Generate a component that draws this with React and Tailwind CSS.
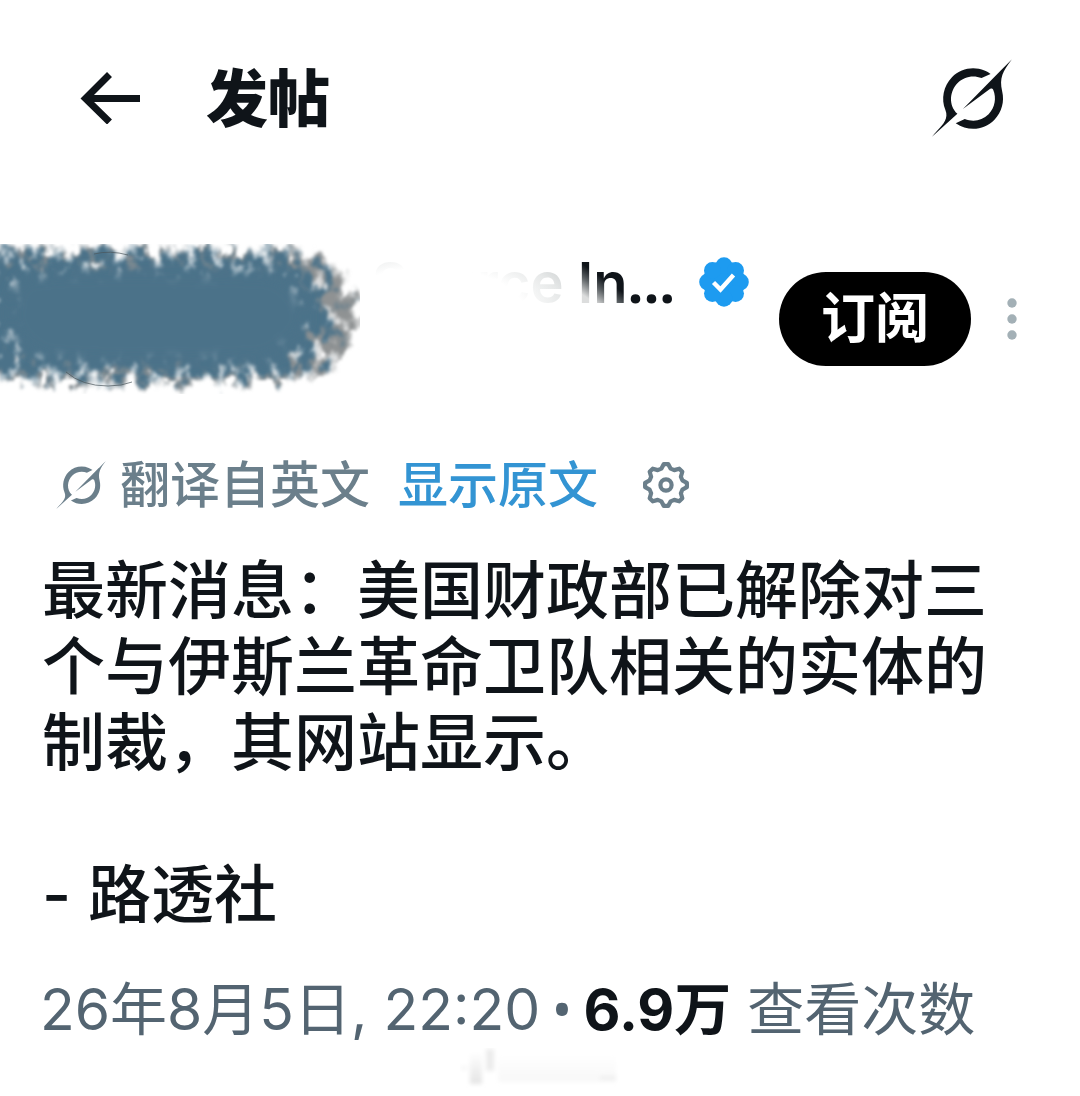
import React from 'react';

const GROK_PATH =
  'M12.745 20.54l10.97-8.19c.539-.4 1.307-.244 1.564.38 1.349 3.288.746 7.241-1.938 9.955-2.683 2.714-6.417 3.31-9.83 1.954l-3.728 1.745c5.347 3.697 11.84 2.782 15.898-1.324 3.219-3.255 4.216-7.692 3.284-11.693l.008.009c-1.351-5.878.332-8.227 3.782-13.031L33 0l-4.54 4.59v-.014L12.743 20.544m-2.263 1.987c-3.837-3.707-3.175-9.446.1-12.755 2.42-2.449 6.388-3.448 9.852-1.979l3.72-1.737c-.67-.49-1.53-1.017-2.515-1.387-4.455-1.854-9.789-.931-13.41 2.728-3.483 3.523-4.579 8.94-2.697 13.561 1.405 3.454-.899 5.898-3.22 8.364C1.49 30.2.666 31.074 0 32l10.478-9.466';

function polar(angle, radius) {
  const rad = (angle * Math.PI) / 180;
  return `${(24 + radius * Math.sin(rad)).toFixed(2)} ${(24 - radius * Math.cos(rad)).toFixed(2)}`;
}

const EIGHTHS = [0, 45, 90, 135, 180, 225, 270, 315];

const GEAR_PATH =
  'M' +
  EIGHTHS.map((a) => [polar(a - 6, 21), polar(a + 6, 21), polar(a + 16, 17), polar(a + 29, 17)].join('L')).join('L') +
  'Z';

function GrokLogo({ className }) {
  return (
    <svg viewBox="0 0 33 32" fill="currentColor" className={className} aria-hidden="true">
      <path d={GROK_PATH} />
    </svg>
  );
}

function VerifiedBadge() {
  return (
    <svg viewBox="-25 -25 50 50" className="w-[50px] h-[50px] shrink-0" role="img" aria-label="已认证">
      <g fill="#1d9bf0">
        <circle r="21" />
        {EIGHTHS.map((a) => (
          <circle key={a} cy="-16.4" r="8.4" transform={`rotate(${a})`} />
        ))}
      </g>
      <path d="M-10.5 0.5L-3.5 7.5L9.5 -7" fill="none" stroke="#fff" strokeWidth="4.4" />
    </svg>
  );
}

function GearIcon() {
  return (
    <svg viewBox="0 0 48 48" fill="none" stroke="currentColor" strokeLinejoin="round" className="w-12 h-12">
      <path d={GEAR_PATH} strokeWidth="4.2" />
      <circle cx="24" cy="24" r="5.6" strokeWidth="4.2" />
    </svg>
  );
}

// Brush stroke that covers the avatar
function BrushCover() {
  return (
    <svg viewBox="0 0 360 150" className="w-[360px] h-[150px] shrink-0" aria-hidden="true">
      <defs>
        <filter
          id="bristle"
          filterUnits="userSpaceOnUse"
          x="-60"
          y="-30"
          width="460"
          height="210"
          colorInterpolationFilters="sRGB"
        >
          <feGaussianBlur in="SourceAlpha" stdDeviation="12" result="soft" />
          <feTurbulence type="fractalNoise" baseFrequency="0.08 0.06" numOctaves="4" seed="7" result="grain" />
          <feColorMatrix values="0 0 0 0 0  0 0 0 0 0  0 0 0 0 0  1.8 0 0 0 -0.4" result="noise" />
          <feComposite in="soft" in2="noise" operator="arithmetic" k1="0" k2="2.6" k3="1.8" k4="-2.3" result="mask" />
          <feDisplacementMap
            in="SourceGraphic"
            in2="grain"
            scale="80"
            xChannelSelector="G"
            yChannelSelector="B"
            result="paint"
          />
          <feComposite in="paint" in2="mask" operator="in" />
          <feGaussianBlur stdDeviation="1.6" />
        </filter>
        <filter id="tint" filterUnits="userSpaceOnUse" x="-80" y="-60" width="520" height="280">
          <feGaussianBlur stdDeviation="6" />
        </filter>
        <filter id="core" filterUnits="userSpaceOnUse" x="-80" y="-60" width="520" height="280">
          <feGaussianBlur stdDeviation="7" />
        </filter>
      </defs>
      <g filter="url(#bristle)">
        <path d="M-16 -2H296Q362 8 366 82Q352 136 286 146H40Q4 146 -16 130Z" fill="#8f9293" />
        <path d="M-40 6H286Q324 22 332 74Q320 126 274 136H44Q14 136 -40 124Z" fill="#4c7289" filter="url(#tint)" />
      </g>
      <path d="M24 34Q60 24 270 30Q304 42 306 76Q298 104 262 116Q120 122 44 114Q14 100 10 74Q10 44 24 34Z" fill="#4c7289" filter="url(#core)" />
      <path d="M94 10Q110 6 128 11M66 128Q82 142 108 142Q122 142 132 138" fill="none" stroke="#4b565c" strokeWidth="0.7" />
    </svg>
  );
}

function Header() {
  return (
    <header className="flex items-center pl-20 pr-[68px] py-12 h-[196px]">
      <button type="button" aria-label="返回">
        <svg viewBox="0 0 60 52" fill="none" stroke="currentColor" strokeWidth="7" className="w-[60px] h-[52px]">
          <path d="M60 26.500H6M29.500 2.500L5.500 26.500L29.500 50" />
        </svg>
      </button>
      <h1 className="ml-[66px] pt-1 text-[62px] leading-[100px] font-black">发帖</h1>
      <button type="button" aria-label="Grok" className="ml-auto">
        <GrokLogo className="w-20 h-[78px]" />
      </button>
    </header>
  );
}

function Author() {
  return (
    <section className="flex items-center mt-12 pr-14">
      <BrushCover />
      <div className="ml-3 h-[150px] shrink-0">
        <div className="flex items-center h-[76px] whitespace-nowrap">
          <span className="text-[56px] leading-[76px] font-semibold">
            <span className="bg-[radial-gradient(ellipse_at_30%_95%,#ffffff_50%,#e6e8e8_72%,#b4b8ba)] bg-clip-text text-transparent">
              Source
            </span>{' '}
            <span className="bg-[linear-gradient(215deg,#0f1419_45%,#5b6063_58%,#dcdddd_75%)] bg-clip-text text-transparent">
              In
            </span>
            <span className="font-['Open_Sans'] font-bold">...</span>
          </span>
          <span className="ml-6">
            <VerifiedBadge />
          </span>
        </div>
      </div>
      <button
        type="button"
        className="ml-auto shrink-0 w-48 h-[94px] rounded-full bg-black text-white text-[54px] leading-[94px] font-bold"
      >
        订阅
      </button>
      <button type="button" aria-label="更多" className="ml-[29px] shrink-0 text-[#a3b0b6]">
        <svg viewBox="0 0 24 48" fill="currentColor" className="w-6 h-12">
          <circle cx="12" cy="8" r="4.700" />
          <circle cx="12" cy="24" r="4.700" />
          <circle cx="12" cy="40" r="4.700" />
        </svg>
      </button>
    </section>
  );
}

function TranslateBar() {
  return (
    <div className="flex items-center mt-14 px-14 text-[50px] leading-[70px] font-medium text-[#6b7f8b]">
      <GrokLogo className="w-[50px] h-12 mr-3.5" />
      <span>翻译自英文</span>
      <a href="#original" className="ml-7 text-[#3394d3]">
        显示原文
      </a>
      <button type="button" aria-label="翻译设置" className="ml-11">
        <GearIcon />
      </button>
    </div>
  );
}

// Washed-out remains of the row under the date
function Smudge() {
  return (
    <svg viewBox="0 0 160 40" className="w-40 h-10 mx-auto" aria-hidden="true">
      <defs>
        <filter id="smudge" x="-10%" y="-10%" width="120%" height="120%">
          <feGaussianBlur stdDeviation="2" />
        </filter>
        <linearGradient id="fade" x1="0" y1="0" x2="0" y2="1">
          <stop offset="0" stopColor="#fff" />
          <stop offset="1" stopColor="#e4e4e4" />
        </linearGradient>
      </defs>
      <g filter="url(#smudge)" fill="url(#fade)">
        <rect x="0" y="16" width="8" height="6" opacity="0.4" />
        <rect x="10" y="4" width="12" height="32" />
        <rect x="26" y="1" width="8" height="22" fill="#ececec" />
        <rect x="38" y="6" width="118" height="28" opacity="0.25" />
        <rect x="140" y="24" width="16" height="8" opacity="0.6" />
      </g>
    </svg>
  );
}

export default function App() {
  return (
    <main className="w-full bg-white text-[#0f1419] font-['Inter','Noto_Sans_CJK_SC',sans-serif]" lang="zh-CN">
      <Header />
      <Author />
      <TranslateBar />

      <article className="mt-8 px-[42px] text-[63px] leading-[76px] font-medium">
        <p>最新消息：美国财政部已解除对三个与伊斯兰革命卫队相关的实体的制裁，其网站显示。</p>
        <p className="mt-[76px]">- 路透社</p>
      </article>

      <p className="mt-[38px] px-10 text-[57px] leading-[76px] text-[#536471] whitespace-nowrap">
        <time dateTime="2026-08-05T22:20">26年8月5日, 22:20</time>
        <span className="mx-[11px] font-['Open_Sans']">•</span>
        <strong className="font-bold text-[#0f1419]">6.9万</strong> 查看次数
      </p>
      <Smudge />
    </main>
  );
}
